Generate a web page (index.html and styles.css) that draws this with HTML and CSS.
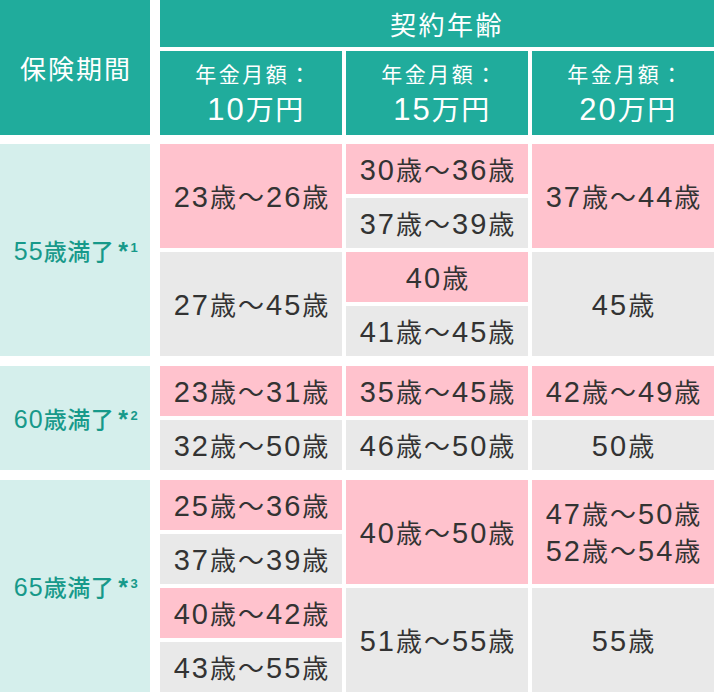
FILE: index.html
```html
<!DOCTYPE html>
<html lang="ja">
<head>
<meta charset="utf-8">
<link rel="stylesheet" href="styles.css">
</head>
<body>
<div class="table">
  <div class="head">
    <div class="h-label">保険期間</div>
    <div class="h-right">
      <div class="h-top">契約年齢</div>
      <div class="h-subs">
        <div class="h-sub"><span class="l1">年金月額：</span><span class="l2"><span class="n">10</span>万円</span></div>
        <div class="h-sub"><span class="l1">年金月額：</span><span class="l2"><span class="n">15</span>万円</span></div>
        <div class="h-sub"><span class="l1">年金月額：</span><span class="l2"><span class="n">20</span>万円</span></div>
      </div>
    </div>
  </div>
  <div class="body">
    <div class="section">
      <div class="label"><span class="v"><span class="n">55</span>歳満了<span class="ast">*</span><sup>1</sup></span></div>
      <div class="cells">
        <div class="cell pink c1 span2"><span class="v"><span class="n">23</span>歳〜<span class="n">26</span>歳</span></div>
        <div class="cell pink c2"><span class="v"><span class="n">30</span>歳〜<span class="n">36</span>歳</span></div>
        <div class="cell pink c3 span2"><span class="v"><span class="n">37</span>歳〜<span class="n">44</span>歳</span></div>
        <div class="cell gray c2"><span class="v"><span class="n">37</span>歳〜<span class="n">39</span>歳</span></div>
        <div class="cell gray c1 span2"><span class="v"><span class="n">27</span>歳〜<span class="n">45</span>歳</span></div>
        <div class="cell pink c2"><span class="v"><span class="n">40</span>歳</span></div>
        <div class="cell gray c3 span2"><span class="v"><span class="n">45</span>歳</span></div>
        <div class="cell gray c2"><span class="v"><span class="n">41</span>歳〜<span class="n">45</span>歳</span></div>
      </div>
    </div>
    <div class="section">
      <div class="label"><span class="v"><span class="n">60</span>歳満了<span class="ast">*</span><sup>2</sup></span></div>
      <div class="cells">
        <div class="cell pink"><span class="v"><span class="n">23</span>歳〜<span class="n">31</span>歳</span></div>
        <div class="cell pink"><span class="v"><span class="n">35</span>歳〜<span class="n">45</span>歳</span></div>
        <div class="cell pink"><span class="v"><span class="n">42</span>歳〜<span class="n">49</span>歳</span></div>
        <div class="cell gray"><span class="v"><span class="n">32</span>歳〜<span class="n">50</span>歳</span></div>
        <div class="cell gray"><span class="v"><span class="n">46</span>歳〜<span class="n">50</span>歳</span></div>
        <div class="cell gray"><span class="v"><span class="n">50</span>歳</span></div>
      </div>
    </div>
    <div class="section">
      <div class="label"><span class="v"><span class="n">65</span>歳満了<span class="ast">*</span><sup>3</sup></span></div>
      <div class="cells">
        <div class="cell pink c1"><span class="v"><span class="n">25</span>歳〜<span class="n">36</span>歳</span></div>
        <div class="cell pink c2 span2"><span class="v"><span class="n">40</span>歳〜<span class="n">50</span>歳</span></div>
        <div class="cell pink c3 span2"><span class="v"><span class="n">47</span>歳〜<span class="n">50</span>歳<br><span class="n">52</span>歳〜<span class="n">54</span>歳</span></div>
        <div class="cell gray c1"><span class="v"><span class="n">37</span>歳〜<span class="n">39</span>歳</span></div>
        <div class="cell pink c1"><span class="v"><span class="n">40</span>歳〜<span class="n">42</span>歳</span></div>
        <div class="cell gray c2 span2"><span class="v"><span class="n">51</span>歳〜<span class="n">55</span>歳</span></div>
        <div class="cell gray c3 span2"><span class="v"><span class="n">55</span>歳</span></div>
        <div class="cell gray c1"><span class="v"><span class="n">43</span>歳〜<span class="n">55</span>歳</span></div>
      </div>
    </div>
  </div>
</div>
</body>
</html>
```
FILE: styles.css
```css
* { box-sizing: border-box; }
html, body { margin: 0; padding: 0; background: #fff; }
body {
  font-family: "Noto Sans CJK JP", "Noto Sans", sans-serif;
  width: 714px;
}
.n {
  font-family: "Liberation Sans", Arial, sans-serif;
}
.table {
  display: flex;
  flex-direction: column;
  gap: 9px;
  width: 714px;
}
.head {
  display: flex;
  gap: 10px;
  height: 135px;
}
.h-label {
  width: 150px;
  flex: none;
  background: #20ac9c;
  color: #fff;
  font-size: 26px;
  letter-spacing: 2px;
  display: flex;
  align-items: center;
  justify-content: center;
  padding-left: 2px;
}
.h-right {
  flex: 1;
  display: flex;
  flex-direction: column;
  gap: 4px;
}
.h-top {
  height: 47px;
  background: #20ac9c;
  color: #fff;
  font-size: 26px;
  letter-spacing: 2.5px;
  display: flex;
  align-items: center;
  justify-content: center;
  padding-left: 20px;
}
.h-subs {
  flex: 1;
  display: grid;
  grid-template-columns: repeat(3, 182px);
  gap: 4px;
}
.h-sub {
  background: #20ac9c;
  color: #fff;
  display: flex;
  flex-direction: column;
  align-items: center;
  justify-content: center;
  padding-top: 2px;
}
.h-sub .l1 {
  font-size: 21px;
  letter-spacing: 2.5px;
  line-height: 30px;
  padding-left: 6px;
}
.h-sub .l2 {
  font-size: 28px;
  letter-spacing: 1.5px;
  line-height: 40px;
  padding-left: 10px;
}
.h-sub .l2 .n {
  font-size: 31px;
  letter-spacing: 2px;
}
.body {
  display: flex;
  flex-direction: column;
  gap: 10px;
}
.section {
  display: flex;
  gap: 10px;
}
.label {
  width: 150px;
  flex: none;
  background: #d5efec;
  color: #17998a;
  font-size: 23px;
  font-weight: 500;
  display: flex;
  align-items: center;
  justify-content: center;
  padding-left: 2px;
}
.label .v { line-height: 30px; letter-spacing: 0.5px; }
.label .n {
  font-size: 25px;
  letter-spacing: 1px;
}
.label .ast {
  font-family: "Liberation Sans", sans-serif;
  font-weight: bold;
  font-size: 25px;
  margin-left: 4px;
}
.label sup {
  font-family: "Liberation Sans", sans-serif;
  font-weight: bold;
  font-size: 13px;
  line-height: 0;
  vertical-align: baseline;
  position: relative;
  top: -8px;
  margin-left: 2px;
}
.cells {
  flex: 1;
  display: grid;
  grid-template-columns: repeat(3, 182px);
  grid-auto-rows: 50px;
  gap: 4px;
}
.cell {
  display: flex;
  align-items: center;
  justify-content: center;
  text-align: center;
  color: #333;
  font-size: 26px;
  padding-left: 2px;
}
.cell .v {
  line-height: 36px;
  letter-spacing: 2px;
}
.cell .n {
  font-size: 29px;
  letter-spacing: 2px;
}
.pink { background: #ffc2cd; }
.gray { background: #e9e9e9; }
.c1 { grid-column: 1; }
.c2 { grid-column: 2; }
.c3 { grid-column: 3; }
.span2 { grid-row: span 2; }
```
